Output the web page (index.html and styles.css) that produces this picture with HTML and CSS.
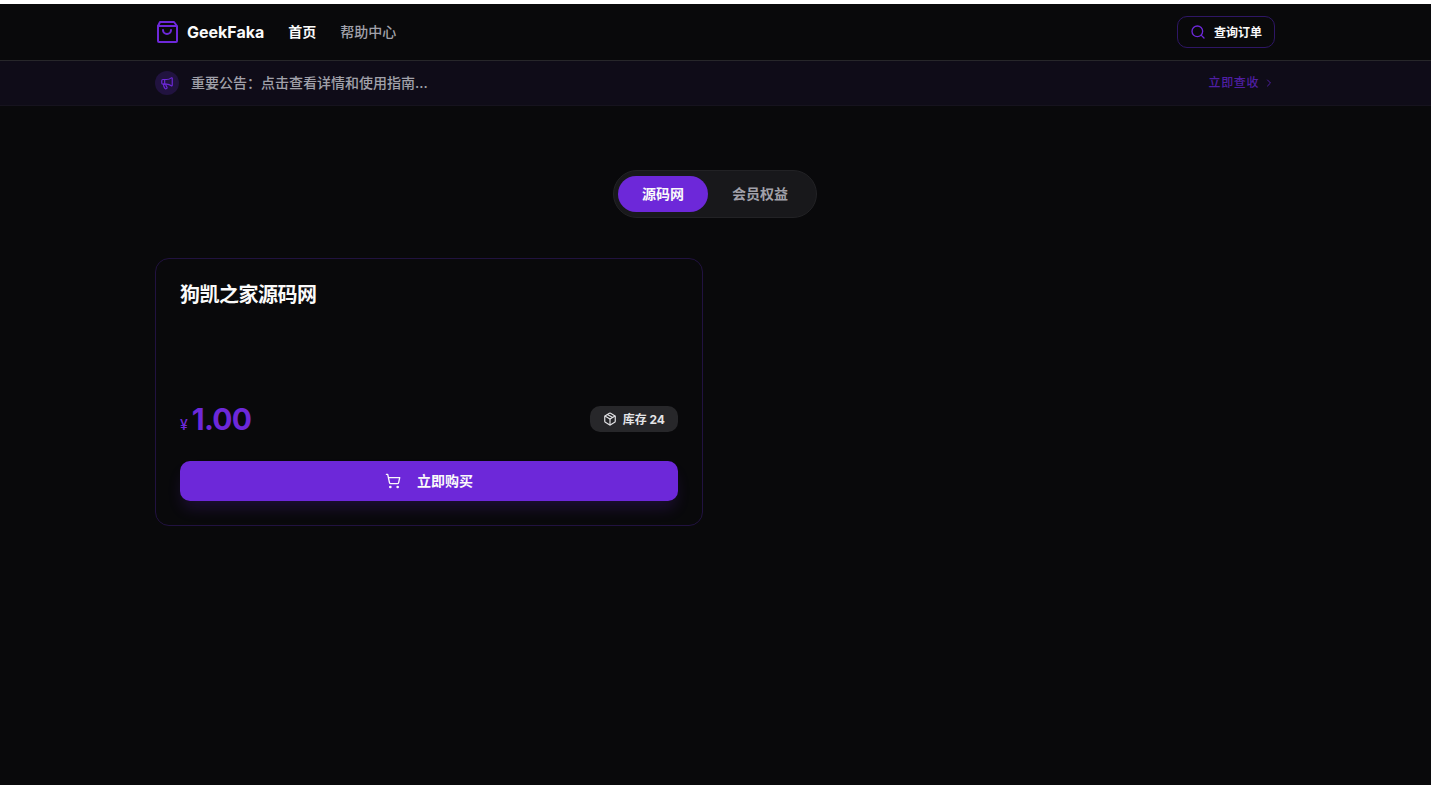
FILE: index.html
```html
<!DOCTYPE html>
<html lang="zh-CN">
<head>
    <meta charset="UTF-8">
    <meta name="viewport" content="width=device-width, initial-scale=1.0">
    <title>GeekFaka</title>
    <link rel="stylesheet" href="styles.css">
</head>
<body>

    <!-- 导航栏 -->
    <header class="navbar">
        <div class="container navbar-container">
            <div class="navbar-left">
                <a href="#" class="navbar-logo">
                    <svg class="logo-icon" width="24" height="24" viewBox="0 0 24 24" fill="none" stroke="currentColor" stroke-width="2" stroke-linecap="round" stroke-linejoin="round">
                        <path d="M5 2h14l3 4v15a1 1 0 0 1-1 1H4a1 1 0 0 1-1-1V6z"/>
                        <path d="M3 6h18"/>
                        <path d="M16 10a4 4 0 0 1-8 0"/>
                    </svg>
                    <span>GeekFaka</span>
                </a>
                <a href="#" class="navbar-item active">首页</a>
                <a href="#" class="navbar-item">帮助中心</a>
            </div>
            <a href="#" class="query-button">
                <svg width="16" height="16" viewBox="0 0 24 24" fill="none" stroke="currentColor" stroke-width="2" stroke-linecap="round" stroke-linejoin="round">
                    <circle cx="11" cy="11" r="8"/>
                    <path d="m21 21-4.3-4.3"/>
                </svg>
                <span>查询订单</span>
            </a>
        </div>
    </header>

    <!-- 公告 -->
    <div class="notice">
        <div class="container notice-container">
            <div class="notice-left">
                <span class="notice-icon">
                    <svg width="14" height="14" viewBox="0 0 24 24" fill="none" stroke="currentColor" stroke-width="2" stroke-linecap="round" stroke-linejoin="round">
                        <path d="M11 6a13 13 0 0 0 8.4-2.8A1 1 0 0 1 21 4v12a1 1 0 0 1-1.6.8A13 13 0 0 0 11 14H5a2 2 0 0 1-2-2V8a2 2 0 0 1 2-2z"/>
                        <path d="M6 14a12 12 0 0 0 2.4 7.2 2 2 0 0 0 3.2-2.4A8 8 0 0 1 10 14"/>
                        <path d="M8 6v8"/>
                    </svg>
                </span>
                <span class="notice-text">重要公告：点击查看详情和使用指南...</span>
            </div>
            <a href="#" class="notice-link">
                <span>立即查收</span>
                <svg width="12" height="12" viewBox="0 0 24 24" fill="none" stroke="currentColor" stroke-width="2" stroke-linecap="round" stroke-linejoin="round">
                    <path d="m9 18 6-6-6-6"/>
                </svg>
            </a>
        </div>
    </div>

    <!-- 中间内容 -->
    <main class="container content">
        <div class="tabs-row">
            <div class="tabs">
                <a href="#" class="tab active">源码网</a>
                <a href="#" class="tab">会员权益</a>
            </div>
        </div>

        <div class="product-grid">
            <div class="product-card">
                <h3 class="product-title">狗凯之家源码网</h3>
                <div class="product-meta">
                    <div class="price">
                        <span class="price-unit">¥</span>
                        <span class="price-value">1.00</span>
                    </div>
                    <div class="stock">
                        <svg width="14" height="14" viewBox="0 0 24 24" fill="none" stroke="currentColor" stroke-width="2" stroke-linecap="round" stroke-linejoin="round">
                            <path d="M21 8a2 2 0 0 0-1-1.73l-7-4a2 2 0 0 0-2 0l-7 4A2 2 0 0 0 3 8v8a2 2 0 0 0 1 1.73l7 4a2 2 0 0 0 2 0l7-4A2 2 0 0 0 21 16z"/>
                            <path d="m7.5 4.27 9 5.15"/>
                            <path d="m3.3 7 8.7 5 8.7-5"/>
                            <path d="M12 22V12"/>
                        </svg>
                        <span>库存 24</span>
                    </div>
                </div>
                <button class="buy-button">
                    <svg width="16" height="16" viewBox="0 0 24 24" fill="none" stroke="currentColor" stroke-width="2" stroke-linecap="round" stroke-linejoin="round">
                        <circle cx="8" cy="21" r="1"/>
                        <circle cx="19" cy="21" r="1"/>
                        <path d="M2.05 2.05h2l2.66 12.42a2 2 0 0 0 2 1.58h9.78a2 2 0 0 0 1.95-1.57l1.65-7.43H5.12"/>
                    </svg>
                    <span>立即购买</span>
                </button>
            </div>
        </div>
    </main>

</body>
</html>
```

FILE: styles.css
```css
/* 全局样式 */
html {
    background-color: #fff;
}

body {
    font-family: Inter, 'Noto Sans CJK SC', sans-serif;
    background-color: #09090b;
    color: #fafafa;
    margin: 4px 0 0;
    padding: 0;
    min-height: 781px;
    overflow-x: hidden;
}

a {
    text-decoration: none;
}

.container {
    width: 1120px;
    margin: 0 156px 0 155px;
}

/* 导航栏样式 */
.navbar {
    height: 57px;
    box-sizing: border-box;
    border-bottom: 1px solid #27272a;
}

.navbar-container {
    height: 56px;
    display: flex;
    justify-content: space-between;
    align-items: center;
}

.navbar-left {
    display: flex;
    align-items: center;
    gap: 24px;
}

.navbar-logo {
    display: flex;
    align-items: center;
    gap: 8px;
    color: #fafafa;
    font-size: 16px;
    line-height: 24px;
    font-weight: 700;
}

.logo-icon {
    color: #6d28d9;
}

.navbar-item {
    color: #a1a1aa;
    font-size: 14px;
    line-height: 20px;
    font-weight: 500;
}

.navbar-item.active {
    color: #fafafa;
    font-weight: 700;
}

.query-button {
    display: flex;
    align-items: center;
    gap: 8px;
    height: 32px;
    box-sizing: border-box;
    padding: 0 12px;
    border: 1px solid #2e1665;
    border-radius: 10px;
    color: #fafafa;
    font-size: 12px;
    line-height: 17px;
    font-weight: 700;
}

.query-button svg {
    color: #6d28d9;
}

/* 公告 */
.notice {
    height: 45px;
    box-sizing: border-box;
    background-color: #0f0c18;
    border-bottom: 1px solid #16131e;
}

.notice-container {
    height: 44px;
    display: flex;
    justify-content: space-between;
    align-items: center;
}

.notice-left {
    display: flex;
    align-items: center;
    gap: 12px;
}

.notice-icon {
    width: 24px;
    height: 24px;
    border-radius: 50%;
    background-color: #21133f;
    color: #6d28d9;
    display: flex;
    align-items: center;
    justify-content: center;
}

.notice-text {
    color: #a1a1aa;
    font-size: 14px;
    line-height: 20px;
    font-weight: 500;
}

.notice-link {
    display: flex;
    align-items: center;
    gap: 4px;
    color: #4f1fa3;
    font-size: 12px;
    line-height: 16px;
    letter-spacing: 0.6px;
    font-weight: 500;
}

/* 分类标签 */
.content {
    padding-top: 64px;
}

.tabs-row {
    display: flex;
    justify-content: center;
    margin-bottom: 40px;
}

.tabs {
    display: flex;
    padding: 5px 4px;
    height: 48px;
    box-sizing: border-box;
    border: 1px solid #222225;
    border-radius: 24px;
    background-color: #18181b;
}

.tab {
    display: flex;
    align-items: center;
    padding: 0 24px;
    border-radius: 18px;
    color: #a1a1aa;
    font-size: 14px;
    line-height: 20px;
    font-weight: 700;
}

.tab.active {
    background-color: #6d28d9;
    color: #fafafa;
}

/* 商品卡片 */
.product-grid {
    display: grid;
    grid-template-columns: 1fr 1fr;
    gap: 24px;
}

.product-card {
    height: 268px;
    box-sizing: border-box;
    padding: 24px;
    border: 1px solid #211240;
    border-radius: 14px;
    display: flex;
    flex-direction: column;
}

.product-title {
    margin: 0;
    font-size: 20px;
    line-height: 25px;
    letter-spacing: -0.5px;
    font-weight: 700;
    color: #fafafa;
}

.product-meta {
    margin-top: auto;
    display: flex;
    justify-content: space-between;
    align-items: center;
    margin-bottom: 24px;
}

.price {
    display: flex;
    align-items: baseline;
    gap: 4px;
    color: #6d28d9;
}

.price-unit {
    font-size: 14px;
    line-height: 20px;
    font-weight: 500;
}

.price-value {
    font-size: 30px;
    line-height: 36px;
    font-weight: 700;
    letter-spacing: -0.75px;
}

.stock {
    display: flex;
    align-items: center;
    gap: 6px;
    height: 26px;
    padding: 0 13px;
    border-radius: 10px;
    background-color: #27272a;
    color: #e4e4e7;
    font-size: 12px;
    line-height: 17px;
    font-weight: 700;
}

.buy-button {
    height: 40px;
    border: none;
    border-radius: 10px;
    background-color: #6d28d9;
    box-shadow: 0 10px 15px -3px rgba(109, 40, 217, 0.2);
    color: #fafafa;
    font-family: inherit;
    font-size: 14px;
    line-height: 20px;
    font-weight: 700;
    display: flex;
    align-items: center;
    justify-content: center;
    gap: 16px;
    flex-shrink: 0;
}
```
